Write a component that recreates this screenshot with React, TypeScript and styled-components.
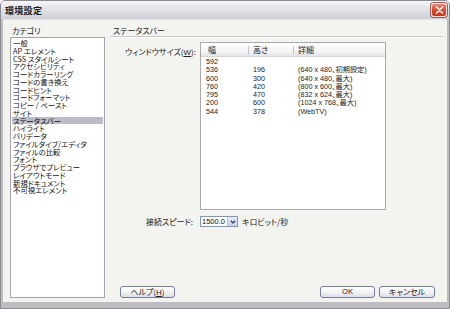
import React from 'react';
import styled, { createGlobalStyle } from 'styled-components';

const GlobalStyle = createGlobalStyle`
  html, body {
    margin: 0;
    padding: 0;
    background: #ffffff;
  }
  * {
    box-sizing: border-box;
  }
`;

const jp = `"Noto Sans CJK JP", "Noto Sans", sans-serif`;
const latin = `"Liberation Sans", "Noto Sans CJK JP", sans-serif`;

const Window = styled.div`
  width: 450px;
  height: 309px;
  display: flex;
  flex-direction: column;
  background: #bdbdc0;
  border: 1px solid #8c8c90;
  border-radius: 5px 5px 0 0;
  overflow: hidden;
  font-family: ${jp};
  font-feature-settings: 'palt';
  color: #000;
`;

const TitleBar = styled.div`
  height: 18px;
  flex: none;
  display: flex;
  align-items: center;
  justify-content: space-between;
  padding: 0 2px 0 4px;
  background: linear-gradient(#f6f6f8, #dcdce2 60%, #d0d0d8);
`;

const Title = styled.span`
  font-size: 9px;
  font-weight: 700;
  letter-spacing: 0.3px;
  color: #1a1a1a;
`;

const CloseButton = styled.div`
  width: 16px;
  height: 14px;
  border-radius: 3px;
  border: 1px solid #f4e4e0;
  background: linear-gradient(#e88a76, #d24a32 55%, #c23a24);
  display: flex;
  align-items: center;
  justify-content: center;
  box-shadow: 0 0 0 1px #a0584c;
`;

const Frame = styled.div`
  flex: 1;
  display: flex;
  padding: 0 2px 6px 2px;
`;

const Body = styled.div`
  flex: 1;
  display: flex;
  gap: 5px;
  padding: 6px 4px 4px 7px;
  background: #f3f3ef;
  border-top: 1px solid #e6e6ea;
`;

const Sidebar = styled.div`
  width: 95px;
  display: flex;
  flex-direction: column;
`;

const SectionLabel = styled.div`
  height: 11px;
  font-size: 8px;
  line-height: 10px;
  padding-left: 2px;
  color: #222;
`;

const CategoryList = styled.div`
  flex: 1;
  background: #ffffff;
  border: 1px solid #a4a4a8;
  padding: 1px 1px;
  display: flex;
  flex-direction: column;
`;

const CategoryItem = styled.div<{ $selected?: boolean }>`
  height: 7.75px;
  font-size: 7.4px;
  line-height: 7.75px;
  padding-left: 1px;
  white-space: nowrap;
  color: #111;
  background: ${({ $selected }) => ($selected ? '#bcbcc8' : 'transparent')};
`;

const Panel = styled.div`
  flex: 1;
  display: flex;
  flex-direction: column;
`;

const PanelHeading = styled.div`
  height: 11px;
  font-size: 8px;
  line-height: 10px;
  padding-left: 3px;
  color: #222;
  border-bottom: 1px solid #c9c9cc;
  box-shadow: 0 1px 0 #ffffff;
`;

const Settings = styled.div`
  margin-top: 5px;
  display: grid;
  grid-template-columns: 86px 186px;
  column-gap: 4px;
  row-gap: 6px;
`;

const FieldLabel = styled.div`
  font-size: 8px;
  line-height: 10px;
  text-align: right;
  padding-top: 5px;
  white-space: nowrap;
  color: #222;
`;

const SpeedLabel = styled(FieldLabel)`
  padding-top: 1px;
  padding-right: 3px;
`;

const SizeTable = styled.div`
  height: 168px;
  background: #ffffff;
  border: 1px solid #a9a9ad;
  display: flex;
  flex-direction: column;
`;

const HeaderRow = styled.div`
  height: 14px;
  display: grid;
  grid-template-columns: 47px 45px 1fr;
  background: linear-gradient(#ffffff, #f3f3f3 70%, #e4e4e6);
  border-bottom: 1px solid #d4d4d8;
  margin-bottom: 1px;
`;

const HeaderCell = styled.div<{ $first?: boolean }>`
  font-size: 8px;
  line-height: 13px;
  padding-left: ${({ $first }) => ($first ? '7px' : '5px')};
  position: relative;
  color: #222;

  &:not(:first-child)::before {
    content: '';
    position: absolute;
    left: 0;
    top: 3px;
    height: 8px;
    width: 1px;
    background: #c4c4c8;
  }
`;

const DataRow = styled.div`
  height: 8.3px;
  display: grid;
  grid-template-columns: 47px 45px 1fr;
  font-family: ${latin};
  font-size: 7.2px;
  line-height: 8.3px;
  color: #222;
`;

const DataCell = styled.div`
  padding-left: 5px;
  white-space: nowrap;
  overflow: hidden;
`;

const SpeedRow = styled.div`
  display: flex;
  align-items: center;
  gap: 4px;
  height: 11px;
`;

const Select = styled.div`
  width: 38px;
  height: 11px;
  display: flex;
  background: #ffffff;
  border: 1px solid #7f96b8;
`;

const SelectValue = styled.div`
  flex: 1;
  font-family: ${latin};
  font-size: 7.5px;
  line-height: 9px;
  padding-left: 1px;
  color: #111;
`;

const SelectArrow = styled.div`
  width: 10px;
  display: flex;
  align-items: center;
  justify-content: center;
  background: linear-gradient(#e8eefa, #c6d2ea);
  border-left: 1px solid #b4c2dc;
`;

const Unit = styled.span`
  font-size: 8px;
  line-height: 10px;
  color: #222;
`;

const Footer = styled.div`
  margin-top: auto;
  display: flex;
  align-items: center;
  padding: 0 8px 0 10px;
`;

const Button = styled.div<{ $width: number }>`
  width: ${({ $width }) => $width}px;
  height: 12px;
  border: 1px solid #6f7f9c;
  border-radius: 3px;
  background: linear-gradient(#ffffff, #f1f1f3 60%, #dcdce2);
  font-size: 8px;
  line-height: 10px;
  text-align: center;
  color: #222;
`;

const OkButton = styled(Button)`
  margin-left: auto;
  font-family: ${latin};
  font-size: 7.5px;
`;

const CancelButton = styled(Button)`
  margin-left: 4px;
`;

const Mnemonic = styled.span`
  text-decoration: underline;
  font-family: ${latin};
`;

const categories = [
  '一般',
  'AP エレメント',
  'CSS スタイルシート',
  'アクセシビリティ',
  'コードカラーリング',
  'コードの書き換え',
  'コードヒント',
  'コードフォーマット',
  'コピー / ペースト',
  'サイト',
  'ステータスバー',
  'ハイライト',
  'バリデータ',
  'ファイルタイプ/エディタ',
  'ファイルの比較',
  'フォント',
  'ブラウザでプレビュー',
  'レイアウトモード',
  '新規ドキュメント',
  '不可視エレメント',
];

const sizes: [string, string, string][] = [
  ['592', '', ''],
  ['536', '196', '(640 x 480、初期設定)'],
  ['600', '300', '(640 x 480、最大)'],
  ['760', '420', '(800 x 600、最大)'],
  ['795', '470', '(832 x 624、最大)'],
  ['200', '600', '(1024 x 768、最大)'],
  ['544', '378', '(WebTV)'],
];

const CloseIcon = () => (
  <svg width="9" height="8" viewBox="0 0 9 8">
    <path d="M1.5 1 L7.5 7 M7.5 1 L1.5 7" stroke="#ffffff" strokeWidth="1.6" strokeLinecap="round" />
  </svg>
);

const ChevronIcon = () => (
  <svg width="6" height="4" viewBox="0 0 6 4">
    <path d="M0.8 0.6 L3 3 L5.2 0.6" stroke="#2b3a5c" strokeWidth="1.3" fill="none" />
  </svg>
);

export default function App() {
  return (
    <>
      <GlobalStyle />
      <Window>
        <TitleBar>
          <Title>環境設定</Title>
          <CloseButton>
            <CloseIcon />
          </CloseButton>
        </TitleBar>
        <Frame>
          <Body>
            <Sidebar>
              <SectionLabel>カテゴリ</SectionLabel>
              <CategoryList>
                {categories.map((c) => (
                  <CategoryItem key={c} $selected={c === 'ステータスバー'}>
                    {c}
                  </CategoryItem>
                ))}
              </CategoryList>
            </Sidebar>
            <Panel>
              <PanelHeading>ステータスバー</PanelHeading>
              <Settings>
                <FieldLabel>ウィンドウサイズ(<Mnemonic>W</Mnemonic>):</FieldLabel>
                <SizeTable>
                  <HeaderRow>
                    <HeaderCell $first>幅</HeaderCell>
                    <HeaderCell>高さ</HeaderCell>
                    <HeaderCell>詳細</HeaderCell>
                  </HeaderRow>
                  {sizes.map(([w, h, d]) => (
                    <DataRow key={w}>
                      <DataCell>{w}</DataCell>
                      <DataCell>{h}</DataCell>
                      <DataCell>{d}</DataCell>
                    </DataRow>
                  ))}
                </SizeTable>
                <SpeedLabel>接続スピード:</SpeedLabel>
                <SpeedRow>
                  <Select>
                    <SelectValue>1500.0</SelectValue>
                    <SelectArrow>
                      <ChevronIcon />
                    </SelectArrow>
                  </Select>
                  <Unit>キロビット/秒</Unit>
                </SpeedRow>
              </Settings>
              <Footer>
                <Button $width={55}>
                  ヘルプ(<Mnemonic>H</Mnemonic>)
                </Button>
                <OkButton $width={55}>OK</OkButton>
                <CancelButton $width={56}>キャンセル</CancelButton>
              </Footer>
            </Panel>
          </Body>
        </Frame>
      </Window>
    </>
  );
}
